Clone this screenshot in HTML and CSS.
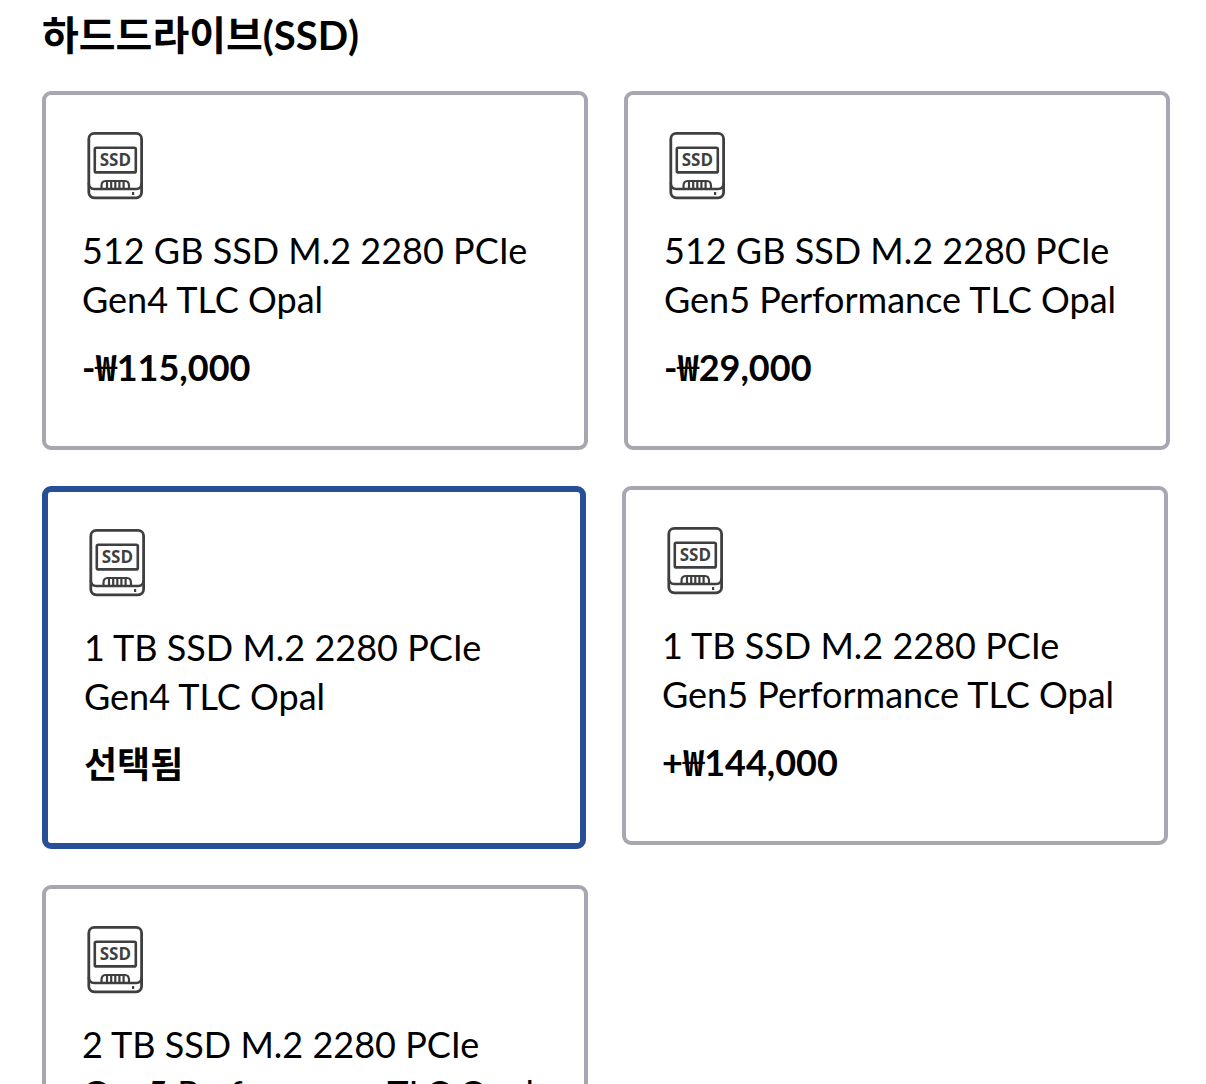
FILE: index.html
```html
<!DOCTYPE html>
<html lang="ko">
<head>
    <meta charset="UTF-8">
    <meta name="viewport" content="width=device-width, initial-scale=1.0">
    <title>하드드라이브(SSD)</title>
    <link rel="stylesheet" href="styles.css">
</head>
<body>
    <!-- Shared drive icon -->
    <svg class="sprite" aria-hidden="true">
        <symbol id="ssd" viewBox="0 0 64 72">
            <g fill="none" stroke="#3f3f41" stroke-width="2.8">
                <rect x="6.8" y="2.4" width="52.8" height="64.4" rx="5.5"/>
                <rect x="12.8" y="16.8" width="41" height="24.6" rx="1.5" stroke-width="2.6"/>
                <path d="M6.8 52c0 4 2 6 5.5 6h41.800c3.500 0 5.500-2 5.500-6" stroke-width="2.4"/>
                <path d="M19.500 58v-3q0-5 4-5h19.500q4 0 4 5v3M25 50v7.500M29.200 50v7.500M33.300 50v7.500M37.400 50v7.500M41.600 50v7.500" stroke-width="2.2"/>
            </g>
            <rect x="50" y="61" width="2.2" height="3" fill="#3f3f41"/>
            <text class="icon-text" x="33.4" y="35.4" text-anchor="middle">SSD</text>
        </symbol>
    </svg>

    <section class="options">
        <h2>하드드라이브(SSD)</h2>
        <div class="cards">
            <button type="button" class="card">
                <svg class="icon" aria-hidden="true"><use href="#ssd"/></svg>
                <span class="name">512 GB SSD M.2 2280 PCIe Gen4 TLC Opal</span>
                <span class="price">-<span class="won">₩</span>115,000</span>
            </button>
            <button type="button" class="card">
                <svg class="icon" aria-hidden="true"><use href="#ssd"/></svg>
                <span class="name">512 GB SSD M.2 2280 PCIe Gen5 Performance TLC Opal</span>
                <span class="price">-<span class="won">₩</span>29,000</span>
            </button>
            <button type="button" class="card selected" aria-pressed="true">
                <svg class="icon" aria-hidden="true"><use href="#ssd"/></svg>
                <span class="name">1 TB SSD M.2 2280 PCIe Gen4 TLC Opal</span>
                <span class="price">선택됨</span>
            </button>
            <button type="button" class="card">
                <svg class="icon" aria-hidden="true"><use href="#ssd"/></svg>
                <span class="name">1 TB SSD M.2 2280 PCIe Gen5 Performance TLC Opal</span>
                <span class="price">+<span class="won">₩</span>144,000</span>
            </button>
            <button type="button" class="card">
                <svg class="icon" aria-hidden="true"><use href="#ssd"/></svg>
                <span class="name">2 TB SSD M.2 2280 PCIe Gen5 Performance TLC Opal</span>
            </button>
        </div>
    </section>
</body>
</html>
```
FILE: styles.css
```css
* {
    box-sizing: border-box;
}
body {
    margin: 0;
    background-color: #fff;
    color: #000;
    font-family: Lato, "Noto Sans CJK KR", sans-serif;
}
.sprite {
    display: none;
}
.options {
    padding: 5px 36px 36px 42px;
}
h2 {
    margin: 0 0 26px;
    font-size: 40px;
    line-height: 60px;
    font-weight: bold;
}
.cards {
    display: flex;
    flex-wrap: wrap;
    align-items: flex-start;
    gap: 36px;
}
.card {
    display: flex;
    flex-direction: column;
    align-items: flex-start;
    width: calc(50% - 18px);
    padding: 36px 36px 54px;
    border: 4px solid #a9a6b1;
    border-radius: 9px;
    background-color: #fff;
    color: inherit;
    font-family: inherit;
    font-size: 36px;
    line-height: 49px;
    text-align: left;
    cursor: pointer;
}
.card.selected {
    width: calc(50% - 20px);
    border: 6px solid #264f98;
}
.icon {
    width: 64px;
    height: 72px;
    margin-bottom: 23px;
}
.icon-text {
    font-family: "Open Sans", sans-serif;
    font-size: 17px;
    font-weight: bold;
    fill: #3f3f41;
}
.price {
    margin-top: 19px;
    font-weight: bold;
}
/* Narrow won sign */
.won {
    font-family: "Noto Sans CJK KR", sans-serif;
    line-height: 1;
}
```
